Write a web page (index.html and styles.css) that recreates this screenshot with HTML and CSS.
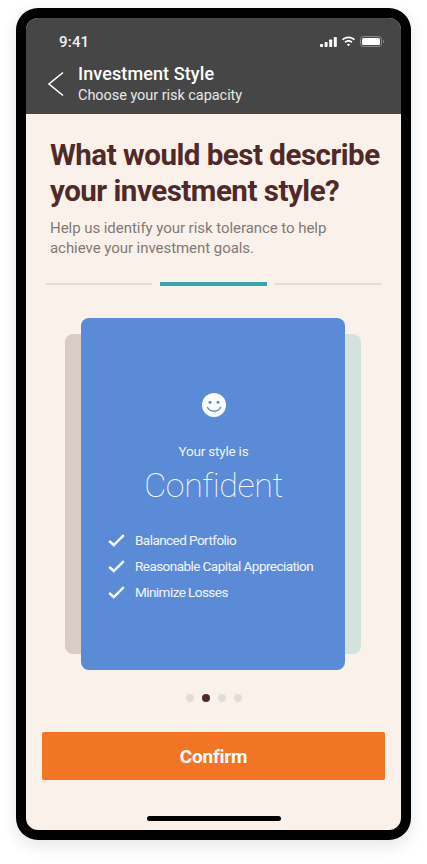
FILE: index.html
```html
<!DOCTYPE html>
<html lang="en">
<head>
<meta charset="utf-8">
<title>Investment Style</title>
<link rel="stylesheet" href="styles.css">
</head>
<body>
<div class="device">
  <main class="screen">
    <header class="topbar">
      <div class="status">
        <span class="time">9:41</span>
        <span class="status-icons">
          <svg width="17" height="10" viewBox="0 0 17 10"><rect x="0" y="7" width="3" height="3" rx=".7"/><rect x="4.6" y="5" width="3" height="5" rx=".7"/><rect x="9.2" y="2.5" width="3" height="7.5" rx=".7"/><rect x="13.8" y="0" width="3" height="10" rx=".7"/></svg>
          <svg width="15" height="11" viewBox="0 0 15 11"><path d="M7.5 2.2c2.1 0 4 .8 5.4 2.1l1.1-1.1C12.300 1.600 10 .6 7.500.6S2.700 1.600 1 3.200l1.100 1.100C3.500 3 5.400 2.200 7.500 2.200z"/><path d="M7.500 5.800c1.100 0 2.100.4 2.900 1.100l1.100-1.200C10.400 4.700 9 4.100 7.500 4.100s-2.900.6-4 1.600l1.100 1.200c.8-.7 1.800-1.100 2.900-1.100z"/><path d="M7.500 7.700c-.7 0-1.300.3-1.700.7l1.700 1.900 1.700-1.900c-.4-.4-1-.7-1.700-.7z"/></svg>
          <svg width="24" height="11" viewBox="0 0 24 11"><rect class="batt-frame" x=".5" y=".5" width="21" height="10" rx="3"/><rect x="2" y="2" width="18" height="7" rx="1.600"/><path class="batt-cap" d="M23 3.800v3.400c.6-.2 1-.9 1-1.700s-.4-1.500-1-1.700z"/></svg>
        </span>
      </div>
      <div class="nav">
        <svg class="back" width="18" height="26" viewBox="0 0 18 26"><path d="M16 1.500 2 13l14 11.500"/></svg>
        <div class="nav-text">
          <h2 class="nav-title">Investment Style</h2>
          <p class="nav-sub">Choose your risk capacity</p>
        </div>
      </div>
    </header>

    <section class="content">
      <h1 class="question">What would best describe your investment style?</h1>
      <p class="lead">Help us identify your risk tolerance to help achieve your investment goals.</p>

      <div class="steps">
        <span class="step"></span>
        <span class="step active"></span>
        <span class="step"></span>
      </div>

      <div class="deck">
        <div class="peek peek-left"></div>
        <div class="peek peek-right"></div>
        <article class="card">
          <svg class="smile" width="24" height="24" viewBox="0 0 24 24">
            <circle cx="12" cy="12" r="12" fill="#fff"/>
            <circle cx="8" cy="9.300" r="1.500" fill="#5b8ad7"/>
            <circle cx="16" cy="9.300" r="1.500" fill="#5b8ad7"/>
            <path d="M5.500 14.500c1.300 2.500 3.700 3.700 6.500 3.700s5.200-1.200 6.500-3.700" fill="none" stroke="#5b8ad7" stroke-width="1.500" stroke-linecap="round"/>
          </svg>
          <p class="style-label">Your style is</p>
          <p class="style-name">Confident</p>
          <ul class="traits">
            <li class="trait"><svg class="check" width="17" height="13" viewBox="0 0 17 13"><path d="M1.200 7 5.800 11 15.800 1.200"/></svg>Balanced Portfolio</li>
            <li class="trait"><svg class="check" width="17" height="13" viewBox="0 0 17 13"><path d="M1.200 7 5.800 11 15.800 1.200"/></svg>Reasonable Capital Appreciation</li>
            <li class="trait"><svg class="check" width="17" height="13" viewBox="0 0 17 13"><path d="M1.200 7 5.800 11 15.800 1.200"/></svg>Minimize Losses</li>
          </ul>
        </article>
      </div>

      <div class="dots">
        <span class="dot"></span>
        <span class="dot current"></span>
        <span class="dot"></span>
        <span class="dot"></span>
      </div>

      <button class="confirm" type="button">Confirm</button>
      <div class="home"></div>
    </section>
  </main>
</div>
</body>
</html>
```

FILE: styles.css
```css
* { box-sizing: border-box; }
html, body { margin: 0; padding: 0; background: #fff; }
body { font-family: "Roboto", "Liberation Sans", sans-serif; height: 864px; overflow: hidden; }
h1, h2, p, ul { margin: 0; padding: 0; }

.device {
  width: 395px;
  height: 832px;
  margin: 8px 0 0 16px;
  padding: 10px;
  background: #000;
  border-radius: 22px;
  box-shadow: 0 6px 16px rgba(0,0,0,.10);
}
.screen {
  height: 812px;
  border-radius: 12px;
  overflow: hidden;
  display: flex;
  flex-direction: column;
  background: #faf1ea;
}

.topbar { height: 96px; background: #464646; color: #fff; flex: none; }
.status {
  height: 36px;
  padding: 11px 17px 0 33px;
  display: flex;
  justify-content: space-between;
  align-items: center;
}
.time { font-size: 15px; font-weight: 500; letter-spacing: .2px; color: #f2f2f2; }
.status-icons { display: flex; align-items: center; gap: 4px; }
.status-icons svg { fill: #fff; display: block; }
.status-icons .batt-frame { fill: none; stroke: #8a8a8a; }
.status-icons .batt-cap { fill: #8a8a8a; }

.nav { display: flex; align-items: center; height: 44px; padding: 18px 0 0 21px; }
.back { fill: none; stroke: #fff; stroke-width: 1.600; flex: none; margin-right: 13px; margin-top: -2px; }
.nav-title { font-size: 18px; line-height: 22px; font-weight: 500; letter-spacing: .1px; }
.nav-sub { font-size: 14.500px; line-height: 22px; font-weight: 400; letter-spacing: -.05px; color: #e8e8e8; }

.content { flex: 1; display: flex; flex-direction: column; position: relative; }
.question {
  margin: 23px 8px 0 24px;
  font-size: 29.500px;
  line-height: 36px;
  font-weight: 700;
  letter-spacing: -.48px;
  color: #4f2a28;
}
.lead {
  margin: 9px 40px 0 24px;
  font-size: 15px;
  line-height: 20px;
  letter-spacing: -.05px;
  color: #7f7a76;
}

.steps { display: flex; gap: 8px; margin: 24px 20px 0; align-items: center; height: 4px; }
.step { flex: 1; height: 2px; background: #e3dbd6; }
.step.active { height: 4px; background: #34a4ad; }

.deck { position: relative; margin: 32px 0 0 39px; width: 296px; padding: 0 16px; height: 352px; }
.peek { position: absolute; top: 16px; bottom: 16px; width: 40px; border-radius: 8px; }
.peek-left { left: 0; background: #d9cbc5; }
.peek-right { right: 0; background: #d3e2dd; }
.card {
  position: relative;
  height: 352px;
  border-radius: 8px;
  background: #5b8ad7;
  color: #fff;
  display: flex;
  flex-direction: column;
  align-items: center;
  padding: 75px 0 0 1px;
}
.smile { display: block; flex: none; }
.style-label { margin-top: 24px; font-size: 13.500px; line-height: 20px; font-weight: 400; letter-spacing: -.2px; color: #f0f4fb; }
.style-name { margin-top: 2px; font-size: 34px; line-height: 44px; font-weight: 100; letter-spacing: -.4px; }
.traits { list-style: none; align-self: stretch; margin-top: 20px; padding-left: 26px; }
.trait {
  display: flex;
  align-items: center;
  height: 26px;
  font-size: 13.500px;
  font-weight: 400;
  letter-spacing: -.55px;
  color: #f3f6fc;
  white-space: nowrap;
}
.check { fill: none; stroke: #fff; stroke-width: 2.400; margin-right: 10px; flex: none; }

.dots { display: flex; justify-content: center; gap: 8px; margin: 24px 0 0; }
.dot { width: 8px; height: 8px; border-radius: 50%; background: #e3dbd6; }
.dot.current { background: #4f2a28; }

.confirm {
  display: block;
  margin: 30px 16px 0;
  height: 48px;
  border: 0;
  border-radius: 2px;
  background: #f27425;
  color: #fff;
  font-family: inherit;
  font-size: 19px;
  font-weight: 700;
  letter-spacing: -.2px;
}
.home {
  width: 134px;
  height: 5px;
  border-radius: 3px;
  background: #000;
  margin: 36px auto 0;
}
```
